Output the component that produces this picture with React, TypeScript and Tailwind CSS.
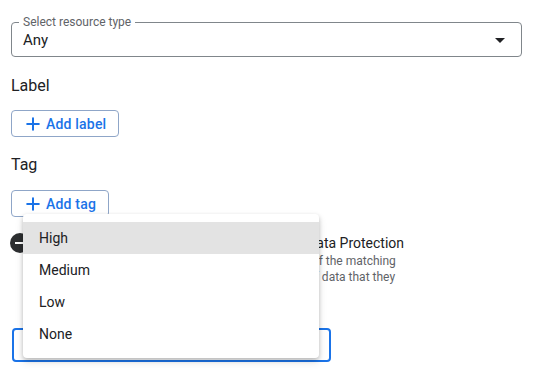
import * as React from "react";
import { Plus } from "lucide-react";

const options = ["High", "Medium", "Low", "None"];

const OutlineButton: React.FC<{ label: string }> = ({ label }) => (
  <button className="flex items-center h-[27px] pl-[11px] pr-[12px] gap-[3px] border border-[#8fa6c8] rounded-[4px] bg-white text-[#1a73e8] text-[14px] font-medium leading-none">
    <Plus className="w-[20px] h-[20px]" strokeWidth={2.4} />
    <span className="tracking-[0.2px]">{label}</span>
  </button>
);

const App: React.FC = () => {
  return (
    <div className="relative w-[539px] h-[378px] overflow-hidden bg-white font-['Roboto',sans-serif] text-[#202124]">
      <div className="pl-[11px] pr-[17px] pt-[22px]">
        {/* resource type select */}
        <div className="relative flex items-center h-[35px] pl-[11px] pr-[16px] border border-[#80868b] rounded-[4px]">
          <span className="absolute -top-[8px] left-[7px] px-[4px] bg-white text-[12px] leading-[14px] text-[#5f6368]">
            Select resource type
          </span>
          <span className="flex-1 text-[15px] leading-none pt-[2px]">Any</span>
          <svg width="10" height="5" viewBox="0 0 10 5" className="mt-[1px]">
            <path d="M0 0 L10 0 L5 5 Z" fill="#202124" />
          </svg>
        </div>

        <div className="mt-[17px] text-[16px] leading-[24px]">Label</div>
        <div className="mt-[12px] flex">
          <OutlineButton label="Add label" />
        </div>

        <div className="mt-[16px] text-[16px] leading-[24px]">Tag</div>
        <div className="mt-[13px] flex">
          <OutlineButton label="Add tag" />
        </div>

        {/* sensitive data protection toggle */}
        <div className="mt-[16px] flex items-start gap-[12px]">
          <div className="relative w-[36px] h-[20px] flex items-center shrink-0">
            <div className="w-[36px] h-[14px] rounded-full bg-[#dadce0]" />
            <div className="absolute -left-[1px] top-0 w-[20px] h-[20px] rounded-full bg-[#2d2f31] flex items-center justify-center">
              <div className="w-[10px] h-[2px] bg-white" />
            </div>
          </div>
          <div className="whitespace-nowrap">
            <div className="text-[14px] leading-[20px] text-[#202124]">
              Use the sensitivity levels from Sensitive Data Protection
            </div>
            <div className="text-[12px] leading-[16px] text-[#5f6368]">
              Set resource values by the data sensitivity level of the matching
              <br />
              resource in the data profiles based on the type of data that they
              <br />
              contain.
            </div>
          </div>
        </div>

        {/* focused resource value select */}
        <div className="mt-[27px] w-[319px] h-[34px] ml-[1px] border-2 border-[#1a73e8] rounded-[4px]" />
      </div>

      {/* open menu */}
      <div className="absolute left-[23px] top-[214px] w-[296px] py-[8px] bg-white rounded-[4px] shadow-[0_2px_4px_rgba(0,0,0,0.2),0_4px_8px_rgba(0,0,0,0.12)]">
        {options.map((opt, i) => (
          <div
            key={opt}
            className={`flex items-center h-[32px] pl-[16px] text-[14px] text-[#202124] ${
              i === 0 ? "bg-[#e3e3e3]" : ""
            }`}
          >
            {opt}
          </div>
        ))}
      </div>
    </div>
  );
};

export default App;
